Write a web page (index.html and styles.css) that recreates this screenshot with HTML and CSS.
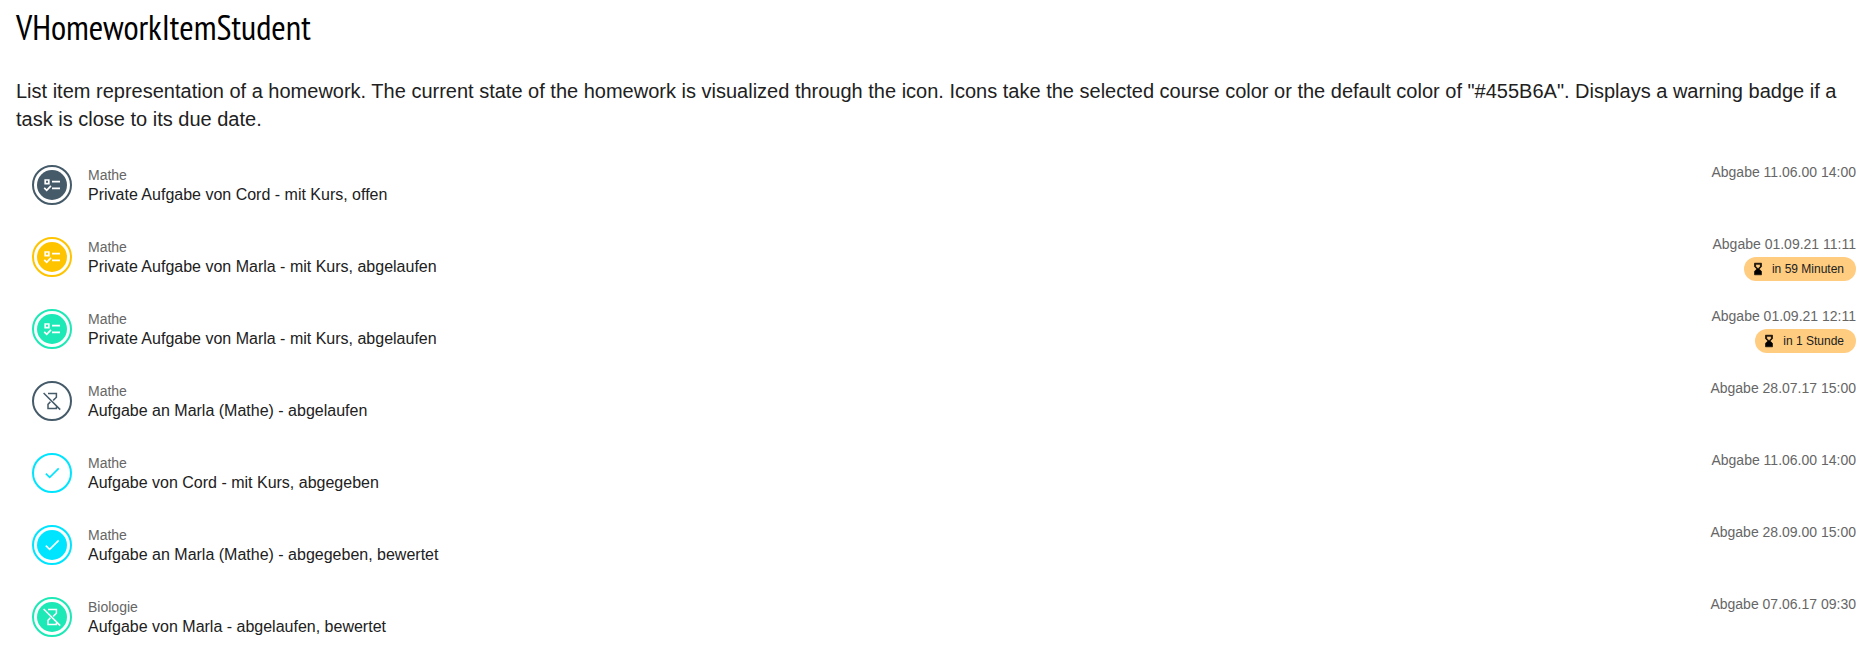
FILE: index.html
```
<!DOCTYPE html>
<html lang="de">
<head>
<meta charset="utf-8">
<title>VHomeworkItemStudent</title>
<link rel="stylesheet" href="styles.css">
</head>
<body>
<svg class="sprite" aria-hidden="true">
  <symbol id="tasks" viewBox="0 0 20 20">
    <path d="M3.2 5h3.6v3.6H3.2zM10 6.6h8M10 13.4h8M2.2 12.9l2.5 2.4 4.2-4.5" fill="none" stroke="currentColor" stroke-width="1.7"/>
  </symbol>
  <symbol id="expired" viewBox="0 0 20 20">
    <path d="M1.6 2l16.6 16.6M6 2.4h8.4v3.8l-3.2 3.2M8.4 10.8L6 13.4v4.2h8.4v-1.9" fill="none" stroke="currentColor" stroke-width="1.5"/>
  </symbol>
  <symbol id="check" viewBox="0 0 20 20">
    <path d="M3.8 10.6l3.9 3.8 9-9" fill="none" stroke="currentColor" stroke-width="1.6"/>
  </symbol>
  <symbol id="sand" viewBox="0 0 24 24">
    <path d="M6 2h12v6l-4 4 4 4v6H6v-6l4-4-4-4zm2 2v3.5l4 4 4-4V4z" fill="currentColor" fill-rule="evenodd" stroke="currentColor"/>
  </symbol>
</svg>
<main class="page">
  <h1 class="title">VHomeworkItemStudent</h1>
  <p class="intro">List item representation of a homework. The current state of the homework is visualized through the icon. Icons take the selected course color or the default color of "#455B6A". Displays a warning badge if a task is close to its due date.</p>
  <ul class="list">
    <li class="item">
      <span class="avatar slate"><span class="disc filled"><svg class="icon"><use href="#tasks"/></svg></span></span>
      <div class="content"><div class="course">Mathe</div><div class="name">Private Aufgabe von Cord - mit Kurs, offen</div></div>
      <div class="due"><span>Abgabe 11.06.00 14:00</span></div>
    </li>
    <li class="item">
      <span class="avatar amber"><span class="disc filled"><svg class="icon"><use href="#tasks"/></svg></span></span>
      <div class="content"><div class="course">Mathe</div><div class="name">Private Aufgabe von Marla - mit Kurs, abgelaufen</div></div>
      <div class="due"><span>Abgabe 01.09.21 11:11</span><span class="badge"><svg class="badge-icon"><use href="#sand"/></svg>in 59 Minuten</span></div>
    </li>
    <li class="item">
      <span class="avatar mint"><span class="disc filled"><svg class="icon"><use href="#tasks"/></svg></span></span>
      <div class="content"><div class="course">Mathe</div><div class="name">Private Aufgabe von Marla - mit Kurs, abgelaufen</div></div>
      <div class="due"><span>Abgabe 01.09.21 12:11</span><span class="badge"><svg class="badge-icon"><use href="#sand"/></svg>in 1 Stunde</span></div>
    </li>
    <li class="item">
      <span class="avatar slate"><span class="disc"><svg class="icon"><use href="#expired"/></svg></span></span>
      <div class="content"><div class="course">Mathe</div><div class="name">Aufgabe an Marla (Mathe) - abgelaufen</div></div>
      <div class="due"><span>Abgabe 28.07.17 15:00</span></div>
    </li>
    <li class="item">
      <span class="avatar cyan"><span class="disc"><svg class="icon"><use href="#check"/></svg></span></span>
      <div class="content"><div class="course">Mathe</div><div class="name">Aufgabe von Cord - mit Kurs, abgegeben</div></div>
      <div class="due"><span>Abgabe 11.06.00 14:00</span></div>
    </li>
    <li class="item">
      <span class="avatar cyan"><span class="disc filled"><svg class="icon"><use href="#check"/></svg></span></span>
      <div class="content"><div class="course">Mathe</div><div class="name">Aufgabe an Marla (Mathe) - abgegeben, bewertet</div></div>
      <div class="due"><span>Abgabe 28.09.00 15:00</span></div>
    </li>
    <li class="item">
      <span class="avatar mint"><span class="disc filled"><svg class="icon"><use href="#expired"/></svg></span></span>
      <div class="content"><div class="course">Biologie</div><div class="name">Aufgabe von Marla - abgelaufen, bewertet</div></div>
      <div class="due"><span>Abgabe 07.06.17 09:30</span></div>
    </li>
  </ul>
</main>
</body>
</html>
```
FILE: styles.css
```
* { box-sizing: border-box; }
body {
  margin: 0;
  background: #fff;
  color: #212121;
  font-family: "Liberation Sans", Arial, sans-serif;
}
.sprite { display: none; }
.page { padding: 7px 16px 0; }
.title {
  margin: 0 0 30px;
  color: #000;
  font: 400 35px/40px "PT Sans Narrow", "Liberation Sans Narrow", "Open Sans Condensed", "Liberation Sans", sans-serif;
}
.intro {
  margin: 0 0 16px;
  font-size: 20px;
  line-height: 28px;
}
.list {
  margin: 0;
  padding: 0;
  list-style: none;
}
.item {
  display: flex;
  align-items: center;
  min-height: 72px;
  padding: 0 3px 0 16px;
}
.avatar {
  display: flex;
  flex: none;
  width: 40px;
  height: 40px;
  margin-right: 16px;
  padding: 3px;
  border: 2px solid currentColor;
  border-radius: 50%;
}
.slate { color: #455b6a; }
.amber { color: #ffc400; }
.mint { color: #1de9b6; }
.cyan { color: #00e5ff; }
.disc {
  display: flex;
  flex: 1;
  align-items: center;
  justify-content: center;
  border-radius: 50%;
}
.filled { background: currentColor; }
.filled .icon { color: #fff; }
.icon { width: 20px; height: 20px; }
.content { flex: 1; min-width: 0; }
.course {
  color: #666;
  font-size: 14px;
  line-height: 20px;
}
.name {
  font-size: 16px;
  line-height: 20px;
}
.due {
  display: flex;
  flex-direction: column;
  align-items: flex-end;
  align-self: flex-start;
  gap: 4px;
  padding-top: 14px;
  color: #666;
  font-size: 14px;
  line-height: 18px;
}
.badge {
  display: flex;
  align-items: center;
  gap: 7px;
  height: 24px;
  padding: 0 12px 0 7px;
  border-radius: 12px;
  background: #ffcc80;
  color: #212121;
  font-size: 12px;
}
.badge-icon { width: 14px; height: 14px; color: #000; }
```
